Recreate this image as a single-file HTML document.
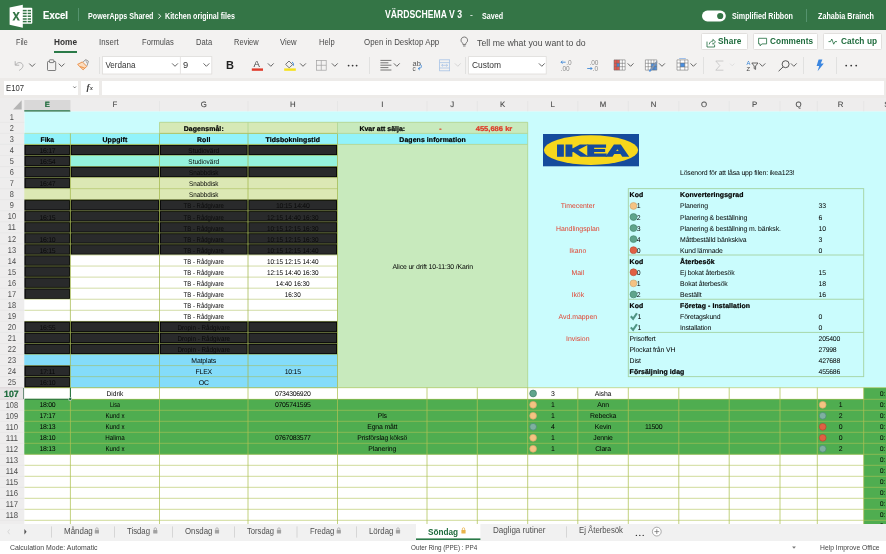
<!DOCTYPE html>
<html><head><meta charset="utf-8"><title>VÄRDSCHEMA V 3</title>
<style>
html,body{margin:0;padding:0;}
body{width:886px;height:554px;overflow:hidden;background:#f3f2f1;font-family:"Liberation Sans", sans-serif;position:relative;}
#w{position:absolute;left:0;top:0;width:886px;height:554px;will-change:transform;}
.a{position:absolute;white-space:nowrap;}
</style></head><body>
<div id="w">
<svg width="886" height="554" viewBox="0 0 886 554" style="position:absolute;left:0;top:0" text-rendering="geometricPrecision" font-family='"Liberation Sans", sans-serif'><rect x="0.00" y="97.00" width="886.00" height="430.00" fill="#ffffff" />
<rect x="24.30" y="111.25" width="861.70" height="276.45" fill="#cafcfd" />
<rect x="24.00" y="144.12" width="46.70" height="11.66" fill="#292a2b" />
<rect x="25.20" y="145.22" width="44.30" height="9.46" fill="none" stroke="#050505" stroke-width="0.9"/>
<rect x="70.10" y="144.12" width="89.70" height="11.66" fill="#292a2b" />
<rect x="71.30" y="145.22" width="87.30" height="9.46" fill="none" stroke="#050505" stroke-width="0.9"/>
<rect x="159.20" y="144.12" width="89.10" height="11.66" fill="#292a2b" />
<rect x="160.40" y="145.22" width="86.70" height="9.46" fill="none" stroke="#050505" stroke-width="0.9"/>
<rect x="247.70" y="144.12" width="90.10" height="11.66" fill="#292a2b" />
<rect x="248.90" y="145.22" width="87.70" height="9.46" fill="none" stroke="#050505" stroke-width="0.9"/>
<rect x="24.00" y="155.18" width="46.70" height="11.66" fill="#292a2b" />
<rect x="25.20" y="156.28" width="44.30" height="9.46" fill="none" stroke="#050505" stroke-width="0.9"/>
<rect x="70.10" y="155.18" width="89.70" height="11.66" fill="#95f3dc" />
<rect x="159.20" y="155.18" width="89.10" height="11.66" fill="#95f3dc" />
<rect x="247.70" y="155.18" width="90.10" height="11.66" fill="#95f3dc" />
<rect x="24.00" y="166.24" width="46.70" height="11.66" fill="#292a2b" />
<rect x="25.20" y="167.34" width="44.30" height="9.46" fill="none" stroke="#050505" stroke-width="0.9"/>
<rect x="70.10" y="166.24" width="89.70" height="11.66" fill="#292a2b" />
<rect x="71.30" y="167.34" width="87.30" height="9.46" fill="none" stroke="#050505" stroke-width="0.9"/>
<rect x="159.20" y="166.24" width="89.10" height="11.66" fill="#292a2b" />
<rect x="160.40" y="167.34" width="86.70" height="9.46" fill="none" stroke="#050505" stroke-width="0.9"/>
<rect x="247.70" y="166.24" width="90.10" height="11.66" fill="#292a2b" />
<rect x="248.90" y="167.34" width="87.70" height="9.46" fill="none" stroke="#050505" stroke-width="0.9"/>
<rect x="24.00" y="177.30" width="46.70" height="11.66" fill="#292a2b" />
<rect x="25.20" y="178.40" width="44.30" height="9.46" fill="none" stroke="#050505" stroke-width="0.9"/>
<rect x="70.10" y="177.30" width="89.70" height="11.66" fill="#dce8b4" />
<rect x="159.20" y="177.30" width="89.10" height="11.66" fill="#dce8b4" />
<rect x="247.70" y="177.30" width="90.10" height="11.66" fill="#dce8b4" />
<rect x="24.00" y="188.36" width="46.70" height="11.66" fill="#dce8b4" />
<rect x="70.10" y="188.36" width="89.70" height="11.66" fill="#dce8b4" />
<rect x="159.20" y="188.36" width="89.10" height="11.66" fill="#dce8b4" />
<rect x="247.70" y="188.36" width="90.10" height="11.66" fill="#dce8b4" />
<rect x="24.00" y="199.41" width="46.70" height="11.66" fill="#292a2b" />
<rect x="25.20" y="200.51" width="44.30" height="9.46" fill="none" stroke="#050505" stroke-width="0.9"/>
<rect x="70.10" y="199.41" width="89.70" height="11.66" fill="#292a2b" />
<rect x="71.30" y="200.51" width="87.30" height="9.46" fill="none" stroke="#050505" stroke-width="0.9"/>
<rect x="159.20" y="199.41" width="89.10" height="11.66" fill="#292a2b" />
<rect x="160.40" y="200.51" width="86.70" height="9.46" fill="none" stroke="#050505" stroke-width="0.9"/>
<rect x="247.70" y="199.41" width="90.10" height="11.66" fill="#292a2b" />
<rect x="248.90" y="200.51" width="87.70" height="9.46" fill="none" stroke="#050505" stroke-width="0.9"/>
<rect x="24.00" y="210.47" width="46.70" height="11.66" fill="#292a2b" />
<rect x="25.20" y="211.57" width="44.30" height="9.46" fill="none" stroke="#050505" stroke-width="0.9"/>
<rect x="70.10" y="210.47" width="89.70" height="11.66" fill="#292a2b" />
<rect x="71.30" y="211.57" width="87.30" height="9.46" fill="none" stroke="#050505" stroke-width="0.9"/>
<rect x="159.20" y="210.47" width="89.10" height="11.66" fill="#292a2b" />
<rect x="160.40" y="211.57" width="86.70" height="9.46" fill="none" stroke="#050505" stroke-width="0.9"/>
<rect x="247.70" y="210.47" width="90.10" height="11.66" fill="#292a2b" />
<rect x="248.90" y="211.57" width="87.70" height="9.46" fill="none" stroke="#050505" stroke-width="0.9"/>
<rect x="24.00" y="221.53" width="46.70" height="11.66" fill="#292a2b" />
<rect x="25.20" y="222.63" width="44.30" height="9.46" fill="none" stroke="#050505" stroke-width="0.9"/>
<rect x="70.10" y="221.53" width="89.70" height="11.66" fill="#292a2b" />
<rect x="71.30" y="222.63" width="87.30" height="9.46" fill="none" stroke="#050505" stroke-width="0.9"/>
<rect x="159.20" y="221.53" width="89.10" height="11.66" fill="#292a2b" />
<rect x="160.40" y="222.63" width="86.70" height="9.46" fill="none" stroke="#050505" stroke-width="0.9"/>
<rect x="247.70" y="221.53" width="90.10" height="11.66" fill="#292a2b" />
<rect x="248.90" y="222.63" width="87.70" height="9.46" fill="none" stroke="#050505" stroke-width="0.9"/>
<rect x="24.00" y="232.59" width="46.70" height="11.66" fill="#292a2b" />
<rect x="25.20" y="233.69" width="44.30" height="9.46" fill="none" stroke="#050505" stroke-width="0.9"/>
<rect x="70.10" y="232.59" width="89.70" height="11.66" fill="#292a2b" />
<rect x="71.30" y="233.69" width="87.30" height="9.46" fill="none" stroke="#050505" stroke-width="0.9"/>
<rect x="159.20" y="232.59" width="89.10" height="11.66" fill="#292a2b" />
<rect x="160.40" y="233.69" width="86.70" height="9.46" fill="none" stroke="#050505" stroke-width="0.9"/>
<rect x="247.70" y="232.59" width="90.10" height="11.66" fill="#292a2b" />
<rect x="248.90" y="233.69" width="87.70" height="9.46" fill="none" stroke="#050505" stroke-width="0.9"/>
<rect x="24.00" y="243.65" width="46.70" height="11.66" fill="#292a2b" />
<rect x="25.20" y="244.75" width="44.30" height="9.46" fill="none" stroke="#050505" stroke-width="0.9"/>
<rect x="70.10" y="243.65" width="89.70" height="11.66" fill="#292a2b" />
<rect x="71.30" y="244.75" width="87.30" height="9.46" fill="none" stroke="#050505" stroke-width="0.9"/>
<rect x="159.20" y="243.65" width="89.10" height="11.66" fill="#292a2b" />
<rect x="160.40" y="244.75" width="86.70" height="9.46" fill="none" stroke="#050505" stroke-width="0.9"/>
<rect x="247.70" y="243.65" width="90.10" height="11.66" fill="#292a2b" />
<rect x="248.90" y="244.75" width="87.70" height="9.46" fill="none" stroke="#050505" stroke-width="0.9"/>
<rect x="24.00" y="254.70" width="46.70" height="11.66" fill="#292a2b" />
<rect x="25.20" y="255.80" width="44.30" height="9.46" fill="none" stroke="#050505" stroke-width="0.9"/>
<rect x="70.10" y="254.70" width="89.70" height="11.66" fill="#ffffff" />
<rect x="159.20" y="254.70" width="89.10" height="11.66" fill="#ffffff" />
<rect x="247.70" y="254.70" width="90.10" height="11.66" fill="#ffffff" />
<rect x="24.00" y="265.76" width="46.70" height="11.66" fill="#292a2b" />
<rect x="25.20" y="266.86" width="44.30" height="9.46" fill="none" stroke="#050505" stroke-width="0.9"/>
<rect x="70.10" y="265.76" width="89.70" height="11.66" fill="#ffffff" />
<rect x="159.20" y="265.76" width="89.10" height="11.66" fill="#ffffff" />
<rect x="247.70" y="265.76" width="90.10" height="11.66" fill="#ffffff" />
<rect x="24.00" y="276.82" width="46.70" height="11.66" fill="#292a2b" />
<rect x="25.20" y="277.92" width="44.30" height="9.46" fill="none" stroke="#050505" stroke-width="0.9"/>
<rect x="70.10" y="276.82" width="89.70" height="11.66" fill="#ffffff" />
<rect x="159.20" y="276.82" width="89.10" height="11.66" fill="#ffffff" />
<rect x="247.70" y="276.82" width="90.10" height="11.66" fill="#ffffff" />
<rect x="24.00" y="287.88" width="46.70" height="11.66" fill="#292a2b" />
<rect x="25.20" y="288.98" width="44.30" height="9.46" fill="none" stroke="#050505" stroke-width="0.9"/>
<rect x="70.10" y="287.88" width="89.70" height="11.66" fill="#ffffff" />
<rect x="159.20" y="287.88" width="89.10" height="11.66" fill="#ffffff" />
<rect x="247.70" y="287.88" width="90.10" height="11.66" fill="#ffffff" />
<rect x="24.00" y="298.94" width="46.70" height="11.66" fill="#ffffff" />
<rect x="70.10" y="298.94" width="89.70" height="11.66" fill="#ffffff" />
<rect x="159.20" y="298.94" width="89.10" height="11.66" fill="#ffffff" />
<rect x="247.70" y="298.94" width="90.10" height="11.66" fill="#ffffff" />
<rect x="24.00" y="309.99" width="46.70" height="11.66" fill="#ffffff" />
<rect x="70.10" y="309.99" width="89.70" height="11.66" fill="#ffffff" />
<rect x="159.20" y="309.99" width="89.10" height="11.66" fill="#ffffff" />
<rect x="247.70" y="309.99" width="90.10" height="11.66" fill="#ffffff" />
<rect x="24.00" y="321.05" width="46.70" height="11.66" fill="#292a2b" />
<rect x="25.20" y="322.15" width="44.30" height="9.46" fill="none" stroke="#050505" stroke-width="0.9"/>
<rect x="70.10" y="321.05" width="89.70" height="11.66" fill="#292a2b" />
<rect x="71.30" y="322.15" width="87.30" height="9.46" fill="none" stroke="#050505" stroke-width="0.9"/>
<rect x="159.20" y="321.05" width="89.10" height="11.66" fill="#292a2b" />
<rect x="160.40" y="322.15" width="86.70" height="9.46" fill="none" stroke="#050505" stroke-width="0.9"/>
<rect x="247.70" y="321.05" width="90.10" height="11.66" fill="#292a2b" />
<rect x="248.90" y="322.15" width="87.70" height="9.46" fill="none" stroke="#050505" stroke-width="0.9"/>
<rect x="24.00" y="332.11" width="46.70" height="11.66" fill="#292a2b" />
<rect x="25.20" y="333.21" width="44.30" height="9.46" fill="none" stroke="#050505" stroke-width="0.9"/>
<rect x="70.10" y="332.11" width="89.70" height="11.66" fill="#292a2b" />
<rect x="71.30" y="333.21" width="87.30" height="9.46" fill="none" stroke="#050505" stroke-width="0.9"/>
<rect x="159.20" y="332.11" width="89.10" height="11.66" fill="#292a2b" />
<rect x="160.40" y="333.21" width="86.70" height="9.46" fill="none" stroke="#050505" stroke-width="0.9"/>
<rect x="247.70" y="332.11" width="90.10" height="11.66" fill="#292a2b" />
<rect x="248.90" y="333.21" width="87.70" height="9.46" fill="none" stroke="#050505" stroke-width="0.9"/>
<rect x="24.00" y="343.17" width="46.70" height="11.66" fill="#292a2b" />
<rect x="25.20" y="344.27" width="44.30" height="9.46" fill="none" stroke="#050505" stroke-width="0.9"/>
<rect x="70.10" y="343.17" width="89.70" height="11.66" fill="#292a2b" />
<rect x="71.30" y="344.27" width="87.30" height="9.46" fill="none" stroke="#050505" stroke-width="0.9"/>
<rect x="159.20" y="343.17" width="89.10" height="11.66" fill="#292a2b" />
<rect x="160.40" y="344.27" width="86.70" height="9.46" fill="none" stroke="#050505" stroke-width="0.9"/>
<rect x="247.70" y="343.17" width="90.10" height="11.66" fill="#292a2b" />
<rect x="248.90" y="344.27" width="87.70" height="9.46" fill="none" stroke="#050505" stroke-width="0.9"/>
<rect x="24.00" y="354.23" width="46.70" height="11.66" fill="#84dcfa" />
<rect x="70.10" y="354.23" width="89.70" height="11.66" fill="#84dcfa" />
<rect x="159.20" y="354.23" width="89.10" height="11.66" fill="#84dcfa" />
<rect x="247.70" y="354.23" width="90.10" height="11.66" fill="#84dcfa" />
<rect x="24.00" y="365.28" width="46.70" height="11.66" fill="#292a2b" />
<rect x="25.20" y="366.38" width="44.30" height="9.46" fill="none" stroke="#050505" stroke-width="0.9"/>
<rect x="70.10" y="365.28" width="89.70" height="11.66" fill="#84dcfa" />
<rect x="159.20" y="365.28" width="89.10" height="11.66" fill="#84dcfa" />
<rect x="247.70" y="365.28" width="90.10" height="11.66" fill="#84dcfa" />
<rect x="24.00" y="376.34" width="46.70" height="11.66" fill="#292a2b" />
<rect x="25.20" y="377.44" width="44.30" height="9.46" fill="none" stroke="#050505" stroke-width="0.9"/>
<rect x="70.10" y="376.34" width="89.70" height="11.66" fill="#84dcfa" />
<rect x="159.20" y="376.34" width="89.10" height="11.66" fill="#84dcfa" />
<rect x="247.70" y="376.34" width="90.10" height="11.66" fill="#84dcfa" />
<rect x="24.00" y="133.07" width="504.00" height="11.66" fill="#92f3fb" />
<rect x="159.20" y="122.01" width="178.60" height="11.66" fill="#d6e9b6" />
<rect x="337.20" y="122.01" width="190.80" height="11.66" fill="#c8eabd" />
<rect x="337.20" y="144.12" width="190.80" height="243.88" fill="#c8eabd" />
<line x1="24.30" y1="133.37" x2="159.50" y2="133.37" stroke="#c5dc9a" stroke-width="0.7" />
<line x1="159.50" y1="133.37" x2="337.50" y2="133.37" stroke="#a4b84e" stroke-width="0.8" />
<line x1="24.30" y1="144.42" x2="337.50" y2="144.42" stroke="#a4b84e" stroke-width="0.9" />
<line x1="24.30" y1="155.48" x2="337.50" y2="155.48" stroke="#a4b84e" stroke-width="0.5" />
<line x1="24.30" y1="166.54" x2="337.50" y2="166.54" stroke="#a4b84e" stroke-width="0.5" />
<line x1="24.30" y1="177.60" x2="337.50" y2="177.60" stroke="#a4b84e" stroke-width="0.5" />
<line x1="24.30" y1="188.66" x2="337.50" y2="188.66" stroke="#a4b84e" stroke-width="0.5" />
<line x1="24.30" y1="199.71" x2="337.50" y2="199.71" stroke="#a4b84e" stroke-width="0.5" />
<line x1="24.30" y1="210.77" x2="337.50" y2="210.77" stroke="#a4b84e" stroke-width="0.5" />
<line x1="24.30" y1="221.83" x2="337.50" y2="221.83" stroke="#a4b84e" stroke-width="0.5" />
<line x1="24.30" y1="232.89" x2="337.50" y2="232.89" stroke="#a4b84e" stroke-width="0.5" />
<line x1="24.30" y1="243.95" x2="337.50" y2="243.95" stroke="#a4b84e" stroke-width="0.5" />
<line x1="24.30" y1="255.00" x2="337.50" y2="255.00" stroke="#a4b84e" stroke-width="0.5" />
<line x1="24.30" y1="266.06" x2="337.50" y2="266.06" stroke="#a4b84e" stroke-width="0.5" />
<line x1="24.30" y1="277.12" x2="337.50" y2="277.12" stroke="#a4b84e" stroke-width="0.5" />
<line x1="24.30" y1="288.18" x2="337.50" y2="288.18" stroke="#a4b84e" stroke-width="0.5" />
<line x1="24.30" y1="299.24" x2="337.50" y2="299.24" stroke="#a4b84e" stroke-width="0.5" />
<line x1="24.30" y1="310.29" x2="337.50" y2="310.29" stroke="#a4b84e" stroke-width="0.5" />
<line x1="24.30" y1="321.35" x2="337.50" y2="321.35" stroke="#a4b84e" stroke-width="0.5" />
<line x1="24.30" y1="332.41" x2="337.50" y2="332.41" stroke="#a4b84e" stroke-width="0.5" />
<line x1="24.30" y1="343.47" x2="337.50" y2="343.47" stroke="#a4b84e" stroke-width="0.5" />
<line x1="24.30" y1="354.53" x2="337.50" y2="354.53" stroke="#a4b84e" stroke-width="0.5" />
<line x1="24.30" y1="365.58" x2="337.50" y2="365.58" stroke="#a4b84e" stroke-width="0.5" />
<line x1="24.30" y1="376.64" x2="337.50" y2="376.64" stroke="#a4b84e" stroke-width="0.5" />
<line x1="24.30" y1="387.70" x2="337.50" y2="387.70" stroke="#a4b84e" stroke-width="0.5" />
<line x1="70.40" y1="133.37" x2="70.40" y2="387.70" stroke="#a4b84e" stroke-width="0.75" />
<line x1="159.50" y1="133.37" x2="159.50" y2="387.70" stroke="#a4b84e" stroke-width="0.75" />
<line x1="248.00" y1="133.37" x2="248.00" y2="387.70" stroke="#a4b84e" stroke-width="0.75" />
<line x1="337.50" y1="133.37" x2="337.50" y2="387.70" stroke="#a4b84e" stroke-width="0.75" />
<line x1="159.50" y1="122.31" x2="527.70" y2="122.31" stroke="#b0d492" stroke-width="0.8" />
<line x1="159.50" y1="122.31" x2="159.50" y2="133.37" stroke="#b0d492" stroke-width="0.8" />
<line x1="248.00" y1="122.31" x2="248.00" y2="133.37" stroke="#b0d492" stroke-width="0.8" />
<line x1="337.50" y1="122.31" x2="337.50" y2="133.37" stroke="#b0d492" stroke-width="0.8" />
<line x1="527.70" y1="122.31" x2="527.70" y2="133.37" stroke="#b0d492" stroke-width="0.8" />
<line x1="337.50" y1="133.37" x2="527.70" y2="133.37" stroke="#b0d492" stroke-width="0.8" />
<line x1="337.50" y1="144.42" x2="527.70" y2="144.42" stroke="#b0d492" stroke-width="0.8" />
<line x1="527.70" y1="133.37" x2="527.70" y2="387.70" stroke="#b0d492" stroke-width="0.8" />
<text x="203.75" y="131.04" font-size="6.9" fill="#000" text-anchor="middle" font-weight="bold"  letter-spacing="0.1" stroke="#000" stroke-width="0.22">Dagensmål:</text>
<text x="359.40" y="131.04" font-size="6.9" fill="#000" text-anchor="start" font-weight="bold"  textLength="45.7" lengthAdjust="spacingAndGlyphs" stroke="#000" stroke-width="0.22">Kvar att sälja:</text>
<text x="440.50" y="131.04" font-size="6.9" fill="#de3b28" text-anchor="middle" font-weight="bold"  letter-spacing="0.1" stroke="#de3b28" stroke-width="0.22">-</text>
<text x="494.00" y="131.04" font-size="6.9" fill="#de3b28" text-anchor="middle" font-weight="bold"  textLength="36.6" lengthAdjust="spacingAndGlyphs" stroke="#de3b28" stroke-width="0.22">455,686 kr</text>
<text x="47.35" y="142.09" font-size="6.9" fill="#000" text-anchor="middle" font-weight="bold"  textLength="13.5" lengthAdjust="spacingAndGlyphs" stroke="#000" stroke-width="0.22">Fika</text>
<text x="114.95" y="142.09" font-size="6.9" fill="#000" text-anchor="middle" font-weight="bold"  letter-spacing="0.1" stroke="#000" stroke-width="0.22">Uppgift</text>
<text x="203.75" y="142.09" font-size="6.9" fill="#000" text-anchor="middle" font-weight="bold"  letter-spacing="0.1" stroke="#000" stroke-width="0.22">Roll</text>
<text x="292.75" y="142.09" font-size="6.9" fill="#000" text-anchor="middle" font-weight="bold"  letter-spacing="0.1" stroke="#000" stroke-width="0.22">Tidsbokningstid</text>
<text x="432.60" y="142.09" font-size="6.9" fill="#000" text-anchor="middle" font-weight="bold"  letter-spacing="0.1" stroke="#000" stroke-width="0.22">Dagens information</text>
<text x="47.35" y="153.15" font-size="6.9" fill="#0a0a0a" text-anchor="middle" font-weight="normal"  letter-spacing="-0.27">16:17</text>
<text x="47.35" y="164.21" font-size="6.9" fill="#0a0a0a" text-anchor="middle" font-weight="normal"  letter-spacing="-0.27">16:54</text>
<text x="47.35" y="186.33" font-size="6.9" fill="#0a0a0a" text-anchor="middle" font-weight="normal"  letter-spacing="-0.27">16:47</text>
<text x="47.35" y="219.50" font-size="6.9" fill="#0a0a0a" text-anchor="middle" font-weight="normal"  letter-spacing="-0.27">16:15</text>
<text x="47.35" y="241.62" font-size="6.9" fill="#0a0a0a" text-anchor="middle" font-weight="normal"  letter-spacing="-0.27">16:10</text>
<text x="47.35" y="252.67" font-size="6.9" fill="#0a0a0a" text-anchor="middle" font-weight="normal"  letter-spacing="-0.27">16:15</text>
<text x="47.35" y="330.08" font-size="6.9" fill="#0a0a0a" text-anchor="middle" font-weight="normal"  letter-spacing="-0.27">16:55</text>
<text x="47.35" y="374.31" font-size="6.9" fill="#0a0a0a" text-anchor="middle" font-weight="normal"  letter-spacing="-0.27">17:11</text>
<text x="47.35" y="385.37" font-size="6.9" fill="#0a0a0a" text-anchor="middle" font-weight="normal"  letter-spacing="-0.27">16:10</text>
<text x="203.75" y="153.15" font-size="6.9" fill="#0a0a0a" text-anchor="middle" font-weight="normal"  textLength="30.8" lengthAdjust="spacingAndGlyphs">Studiovärd</text>
<text x="203.75" y="164.21" font-size="6.9" fill="#000" text-anchor="middle" font-weight="normal"  textLength="30.8" lengthAdjust="spacingAndGlyphs">Studiovärd</text>
<text x="203.75" y="175.27" font-size="6.9" fill="#0a0a0a" text-anchor="middle" font-weight="normal"  textLength="29.5" lengthAdjust="spacingAndGlyphs">Snabbdisk</text>
<text x="203.75" y="186.33" font-size="6.9" fill="#000" text-anchor="middle" font-weight="normal"  textLength="29.5" lengthAdjust="spacingAndGlyphs">Snabbdisk</text>
<text x="203.75" y="197.38" font-size="6.9" fill="#000" text-anchor="middle" font-weight="normal"  textLength="29.5" lengthAdjust="spacingAndGlyphs">Snabbdisk</text>
<text x="203.75" y="208.44" font-size="6.9" fill="#0a0a0a" text-anchor="middle" font-weight="normal"  textLength="40.3" lengthAdjust="spacingAndGlyphs">TB - Rådgivare</text>
<text x="203.75" y="219.50" font-size="6.9" fill="#0a0a0a" text-anchor="middle" font-weight="normal"  textLength="40.3" lengthAdjust="spacingAndGlyphs">TB - Rådgivare</text>
<text x="203.75" y="230.56" font-size="6.9" fill="#0a0a0a" text-anchor="middle" font-weight="normal"  textLength="40.3" lengthAdjust="spacingAndGlyphs">TB - Rådgivare</text>
<text x="203.75" y="241.62" font-size="6.9" fill="#0a0a0a" text-anchor="middle" font-weight="normal"  textLength="40.3" lengthAdjust="spacingAndGlyphs">TB - Rådgivare</text>
<text x="203.75" y="252.67" font-size="6.9" fill="#0a0a0a" text-anchor="middle" font-weight="normal"  textLength="40.3" lengthAdjust="spacingAndGlyphs">TB - Rådgivare</text>
<text x="203.75" y="263.73" font-size="6.9" fill="#000" text-anchor="middle" font-weight="normal"  textLength="40.3" lengthAdjust="spacingAndGlyphs">TB - Rådgivare</text>
<text x="203.75" y="274.79" font-size="6.9" fill="#000" text-anchor="middle" font-weight="normal"  textLength="40.3" lengthAdjust="spacingAndGlyphs">TB - Rådgivare</text>
<text x="203.75" y="285.85" font-size="6.9" fill="#000" text-anchor="middle" font-weight="normal"  textLength="40.3" lengthAdjust="spacingAndGlyphs">TB - Rådgivare</text>
<text x="203.75" y="296.91" font-size="6.9" fill="#000" text-anchor="middle" font-weight="normal"  textLength="40.3" lengthAdjust="spacingAndGlyphs">TB - Rådgivare</text>
<text x="203.75" y="307.96" font-size="6.9" fill="#000" text-anchor="middle" font-weight="normal"  textLength="40.3" lengthAdjust="spacingAndGlyphs">TB - Rådgivare</text>
<text x="203.75" y="319.02" font-size="6.9" fill="#000" text-anchor="middle" font-weight="normal"  textLength="40.3" lengthAdjust="spacingAndGlyphs">TB - Rådgivare</text>
<text x="203.75" y="330.08" font-size="6.9" fill="#0a0a0a" text-anchor="middle" font-weight="normal"  textLength="52.5" lengthAdjust="spacingAndGlyphs">Dropin - Rådgivare</text>
<text x="203.75" y="341.14" font-size="6.9" fill="#0a0a0a" text-anchor="middle" font-weight="normal"  textLength="52.5" lengthAdjust="spacingAndGlyphs">Dropin - Rådgivare</text>
<text x="203.75" y="352.20" font-size="6.9" fill="#0a0a0a" text-anchor="middle" font-weight="normal"  textLength="52.5" lengthAdjust="spacingAndGlyphs">Dropin - Rådgivare</text>
<text x="203.75" y="363.25" font-size="6.9" fill="#000" text-anchor="middle" font-weight="normal"  letter-spacing="-0.15">Matplats</text>
<text x="203.75" y="374.31" font-size="6.9" fill="#000" text-anchor="middle" font-weight="normal"  letter-spacing="-0.15">FLEX</text>
<text x="203.75" y="385.37" font-size="6.9" fill="#000" text-anchor="middle" font-weight="normal"  letter-spacing="-0.15">OC</text>
<text x="292.75" y="208.44" font-size="6.9" fill="#0a0a0a" text-anchor="middle" font-weight="normal"  letter-spacing="-0.27">10:15 14:40</text>
<text x="292.75" y="219.50" font-size="6.9" fill="#0a0a0a" text-anchor="middle" font-weight="normal"  textLength="51.5" lengthAdjust="spacingAndGlyphs">12:15 14:40 16:30</text>
<text x="292.75" y="230.56" font-size="6.9" fill="#0a0a0a" text-anchor="middle" font-weight="normal"  textLength="51.5" lengthAdjust="spacingAndGlyphs">10:15 12:15 16:30</text>
<text x="292.75" y="241.62" font-size="6.9" fill="#0a0a0a" text-anchor="middle" font-weight="normal"  textLength="51.5" lengthAdjust="spacingAndGlyphs">10:15 12:15 16:30</text>
<text x="292.75" y="252.67" font-size="6.9" fill="#0a0a0a" text-anchor="middle" font-weight="normal"  textLength="51.5" lengthAdjust="spacingAndGlyphs">10:15 12:15 14:40</text>
<text x="292.75" y="263.73" font-size="6.9" fill="#000" text-anchor="middle" font-weight="normal"  textLength="51.5" lengthAdjust="spacingAndGlyphs">10:15 12:15 14:40</text>
<text x="292.75" y="274.79" font-size="6.9" fill="#000" text-anchor="middle" font-weight="normal"  textLength="51.5" lengthAdjust="spacingAndGlyphs">12:15 14:40 16:30</text>
<text x="292.75" y="285.85" font-size="6.9" fill="#000" text-anchor="middle" font-weight="normal"  textLength="33.8" lengthAdjust="spacingAndGlyphs">14:40 16:30</text>
<text x="292.75" y="296.91" font-size="6.9" fill="#000" text-anchor="middle" font-weight="normal"  textLength="15.8" lengthAdjust="spacingAndGlyphs">16:30</text>
<text x="292.75" y="374.31" font-size="6.9" fill="#000" text-anchor="middle" font-weight="normal"  letter-spacing="-0.27">10:15</text>
<text x="432.70" y="268.66" font-size="6.9" fill="#000" text-anchor="middle" font-weight="normal"  letter-spacing="-0.15">Alice ur drift 10-11:30 /Karin</text>
<g><rect x="543" y="134" width="96" height="32.3" fill="#154b9c"/><ellipse cx="591" cy="150.1" rx="47.2" ry="14.8" fill="#f7d71c"/><text x="592.3" y="155.6" font-size="15.6" font-weight="bold" fill="#154b9c" text-anchor="middle" textLength="72" lengthAdjust="spacingAndGlyphs" stroke="#154b9c" stroke-width="1.3" stroke-linejoin="miter">IKEA</text></g>
<text x="680.00" y="175.27" font-size="6.9" fill="#000" text-anchor="start" font-weight="normal"  letter-spacing="-0.15">Lösenord för att låsa upp filen: ikea123!</text>
<text x="577.80" y="208.44" font-size="6.9" fill="#e0412f" text-anchor="middle" font-weight="normal"  letter-spacing="0">Timecenter</text>
<text x="577.80" y="230.56" font-size="6.9" fill="#e0412f" text-anchor="middle" font-weight="normal"  letter-spacing="0">Handlingsplan</text>
<text x="577.80" y="252.67" font-size="6.9" fill="#e0412f" text-anchor="middle" font-weight="normal"  letter-spacing="0">Ikano</text>
<text x="577.80" y="274.79" font-size="6.9" fill="#e0412f" text-anchor="middle" font-weight="normal"  letter-spacing="0">Mail</text>
<text x="577.80" y="296.91" font-size="6.9" fill="#e0412f" text-anchor="middle" font-weight="normal"  letter-spacing="0">Ikök</text>
<text x="577.80" y="319.02" font-size="6.9" fill="#e0412f" text-anchor="middle" font-weight="normal"  letter-spacing="0">Avd.mappen</text>
<text x="577.80" y="341.14" font-size="6.9" fill="#e0412f" text-anchor="middle" font-weight="normal"  letter-spacing="0">Invision</text>
<rect x="628.30" y="188.66" width="235.40" height="187.99" fill="none" stroke="#a4d2a0" stroke-width="0.9"/>
<line x1="628.30" y1="255.00" x2="863.70" y2="255.00" stroke="#a4d2a0" stroke-width="0.9" />
<line x1="628.30" y1="299.24" x2="863.70" y2="299.24" stroke="#a4d2a0" stroke-width="0.9" />
<line x1="628.30" y1="332.41" x2="863.70" y2="332.41" stroke="#a4d2a0" stroke-width="0.9" />
<text x="629.60" y="197.38" font-size="6.9" fill="#000" text-anchor="start" font-weight="bold"  letter-spacing="0.1" stroke="#000" stroke-width="0.22">Kod</text>
<text x="680.10" y="197.38" font-size="6.9" fill="#000" text-anchor="start" font-weight="bold"  letter-spacing="0.1" stroke="#000" stroke-width="0.22">Konverteringsgrad</text>
<text x="636.70" y="208.44" font-size="6.9" fill="#000" text-anchor="start" font-weight="normal"  letter-spacing="-0.27">1</text>
<circle cx="633.50" cy="205.94" r="3.45" fill="#f4c383" stroke="#c9a06a" stroke-width="0.6"/>
<text x="680.10" y="208.44" font-size="6.9" fill="#000" text-anchor="start" font-weight="normal"  letter-spacing="-0.15">Planering</text>
<text x="818.60" y="208.44" font-size="6.9" fill="#000" text-anchor="start" font-weight="normal"  letter-spacing="-0.27">33</text>
<text x="636.70" y="219.50" font-size="6.9" fill="#000" text-anchor="start" font-weight="normal"  letter-spacing="-0.27">2</text>
<circle cx="633.50" cy="217.00" r="3.45" fill="#5fa48c" stroke="#3f7f68" stroke-width="0.6"/>
<text x="680.10" y="219.50" font-size="6.9" fill="#000" text-anchor="start" font-weight="normal"  letter-spacing="-0.15">Planering &amp; beställning</text>
<text x="818.60" y="219.50" font-size="6.9" fill="#000" text-anchor="start" font-weight="normal"  letter-spacing="-0.27">6</text>
<text x="636.70" y="230.56" font-size="6.9" fill="#000" text-anchor="start" font-weight="normal"  letter-spacing="-0.27">3</text>
<circle cx="633.50" cy="228.06" r="3.45" fill="#5fa48c" stroke="#3f7f68" stroke-width="0.6"/>
<text x="680.10" y="230.56" font-size="6.9" fill="#000" text-anchor="start" font-weight="normal"  letter-spacing="-0.15">Planering &amp; beställning m. bänksk.</text>
<text x="818.60" y="230.56" font-size="6.9" fill="#000" text-anchor="start" font-weight="normal"  letter-spacing="-0.27">10</text>
<text x="636.70" y="241.62" font-size="6.9" fill="#000" text-anchor="start" font-weight="normal"  letter-spacing="-0.27">4</text>
<circle cx="633.50" cy="239.12" r="3.45" fill="#5fa48c" stroke="#3f7f68" stroke-width="0.6"/>
<text x="680.10" y="241.62" font-size="6.9" fill="#000" text-anchor="start" font-weight="normal"  letter-spacing="-0.15">Måttbeställd bänkskiva</text>
<text x="818.60" y="241.62" font-size="6.9" fill="#000" text-anchor="start" font-weight="normal"  letter-spacing="-0.27">3</text>
<text x="636.70" y="252.67" font-size="6.9" fill="#000" text-anchor="start" font-weight="normal"  letter-spacing="-0.27">0</text>
<circle cx="633.50" cy="250.17" r="3.45" fill="#e06044" stroke="#b8472f" stroke-width="0.6"/>
<text x="680.10" y="252.67" font-size="6.9" fill="#000" text-anchor="start" font-weight="normal"  letter-spacing="-0.15">Kund lämnade</text>
<text x="818.60" y="252.67" font-size="6.9" fill="#000" text-anchor="start" font-weight="normal"  letter-spacing="-0.27">0</text>
<text x="629.60" y="263.73" font-size="6.9" fill="#000" text-anchor="start" font-weight="bold"  letter-spacing="0.1" stroke="#000" stroke-width="0.22">Kod</text>
<text x="680.10" y="263.73" font-size="6.9" fill="#000" text-anchor="start" font-weight="bold"  letter-spacing="0.1" stroke="#000" stroke-width="0.22">Återbesök</text>
<text x="636.70" y="274.79" font-size="6.9" fill="#000" text-anchor="start" font-weight="normal"  letter-spacing="-0.27">0</text>
<circle cx="633.50" cy="272.29" r="3.45" fill="#e06044" stroke="#b8472f" stroke-width="0.6"/>
<text x="680.10" y="274.79" font-size="6.9" fill="#000" text-anchor="start" font-weight="normal"  letter-spacing="-0.15">Ej bokat återbesök</text>
<text x="818.60" y="274.79" font-size="6.9" fill="#000" text-anchor="start" font-weight="normal"  letter-spacing="-0.27">15</text>
<text x="636.70" y="285.85" font-size="6.9" fill="#000" text-anchor="start" font-weight="normal"  letter-spacing="-0.27">1</text>
<circle cx="633.50" cy="283.35" r="3.45" fill="#f4c383" stroke="#c9a06a" stroke-width="0.6"/>
<text x="680.10" y="285.85" font-size="6.9" fill="#000" text-anchor="start" font-weight="normal"  letter-spacing="-0.15">Bokat återbesök</text>
<text x="818.60" y="285.85" font-size="6.9" fill="#000" text-anchor="start" font-weight="normal"  letter-spacing="-0.27">18</text>
<text x="636.70" y="296.91" font-size="6.9" fill="#000" text-anchor="start" font-weight="normal"  letter-spacing="-0.27">2</text>
<circle cx="633.50" cy="294.41" r="3.45" fill="#5fa48c" stroke="#3f7f68" stroke-width="0.6"/>
<text x="680.10" y="296.91" font-size="6.9" fill="#000" text-anchor="start" font-weight="normal"  letter-spacing="-0.15">Beställt</text>
<text x="818.60" y="296.91" font-size="6.9" fill="#000" text-anchor="start" font-weight="normal"  letter-spacing="-0.27">16</text>
<text x="629.60" y="307.96" font-size="6.9" fill="#000" text-anchor="start" font-weight="bold"  letter-spacing="0.1" stroke="#000" stroke-width="0.22">Kod</text>
<text x="680.10" y="307.96" font-size="6.9" fill="#000" text-anchor="start" font-weight="bold"  letter-spacing="0.1" stroke="#000" stroke-width="0.22">Företag - Installation</text>
<path d="M630.80 316.32 l2.3 2.5 l3.8 -5.6" fill="none" stroke="#4f9484" stroke-width="2.1"/>
<text x="637.50" y="319.02" font-size="6.9" fill="#000" text-anchor="start" font-weight="normal"  letter-spacing="-0.27">1</text>
<text x="680.10" y="319.02" font-size="6.9" fill="#000" text-anchor="start" font-weight="normal"  letter-spacing="-0.15">Företagskund</text>
<text x="818.60" y="319.02" font-size="6.9" fill="#000" text-anchor="start" font-weight="normal"  letter-spacing="-0.27">0</text>
<path d="M630.80 327.38 l2.3 2.5 l3.8 -5.6" fill="none" stroke="#4f9484" stroke-width="2.1"/>
<text x="637.50" y="330.08" font-size="6.9" fill="#000" text-anchor="start" font-weight="normal"  letter-spacing="-0.27">1</text>
<text x="680.10" y="330.08" font-size="6.9" fill="#000" text-anchor="start" font-weight="normal"  letter-spacing="-0.15">Installation</text>
<text x="818.60" y="330.08" font-size="6.9" fill="#000" text-anchor="start" font-weight="normal"  letter-spacing="-0.27">0</text>
<text x="629.60" y="341.14" font-size="6.9" fill="#000" text-anchor="start" font-weight="normal"  letter-spacing="-0.15">Prisoffert</text>
<text x="818.60" y="341.14" font-size="6.9" fill="#000" text-anchor="start" font-weight="normal"  letter-spacing="-0.27">205400</text>
<text x="629.60" y="352.20" font-size="6.9" fill="#000" text-anchor="start" font-weight="normal"  letter-spacing="-0.15">Plockat från VH</text>
<text x="818.60" y="352.20" font-size="6.9" fill="#000" text-anchor="start" font-weight="normal"  letter-spacing="-0.27">27998</text>
<text x="629.60" y="363.25" font-size="6.9" fill="#000" text-anchor="start" font-weight="normal"  letter-spacing="-0.15">Dist</text>
<text x="818.60" y="363.25" font-size="6.9" fill="#000" text-anchor="start" font-weight="normal"  letter-spacing="-0.27">427688</text>
<text x="629.60" y="374.31" font-size="6.9" fill="#000" text-anchor="start" font-weight="bold"  letter-spacing="0.1" stroke="#000" stroke-width="0.22">Försäljning idag</text>
<text x="818.60" y="374.31" font-size="6.9" fill="#000" text-anchor="start" font-weight="normal"  letter-spacing="-0.27">455686</text>
<rect x="24.00" y="399.00" width="840.00" height="55.60" fill="#4fad50" />
<rect x="863.70" y="387.70" width="36.30" height="143.60" fill="#4fad50" />
<line x1="24.30" y1="399.30" x2="886.00" y2="399.30" stroke="#aec254" stroke-width="0.6" />
<line x1="24.30" y1="410.30" x2="886.00" y2="410.30" stroke="#aec254" stroke-width="0.6" />
<line x1="24.30" y1="421.30" x2="886.00" y2="421.30" stroke="#aec254" stroke-width="0.6" />
<line x1="24.30" y1="432.30" x2="886.00" y2="432.30" stroke="#aec254" stroke-width="0.6" />
<line x1="24.30" y1="443.30" x2="886.00" y2="443.30" stroke="#aec254" stroke-width="0.6" />
<line x1="24.30" y1="454.30" x2="886.00" y2="454.30" stroke="#aec254" stroke-width="0.6" />
<line x1="24.30" y1="465.30" x2="886.00" y2="465.30" stroke="#aec254" stroke-width="0.6" />
<line x1="24.30" y1="476.30" x2="886.00" y2="476.30" stroke="#aec254" stroke-width="0.6" />
<line x1="24.30" y1="487.30" x2="886.00" y2="487.30" stroke="#aec254" stroke-width="0.6" />
<line x1="24.30" y1="498.30" x2="886.00" y2="498.30" stroke="#aec254" stroke-width="0.6" />
<line x1="24.30" y1="509.30" x2="886.00" y2="509.30" stroke="#aec254" stroke-width="0.6" />
<line x1="24.30" y1="520.30" x2="886.00" y2="520.30" stroke="#aec254" stroke-width="0.6" />
<line x1="24.30" y1="531.30" x2="886.00" y2="531.30" stroke="#aec254" stroke-width="0.6" />
<line x1="70.40" y1="387.70" x2="70.40" y2="531.30" stroke="#aec254" stroke-width="0.75" />
<line x1="159.50" y1="387.70" x2="159.50" y2="531.30" stroke="#aec254" stroke-width="0.75" />
<line x1="248.00" y1="387.70" x2="248.00" y2="531.30" stroke="#aec254" stroke-width="0.75" />
<line x1="337.50" y1="387.70" x2="337.50" y2="531.30" stroke="#aec254" stroke-width="0.75" />
<line x1="427.00" y1="387.70" x2="427.00" y2="531.30" stroke="#aec254" stroke-width="0.75" />
<line x1="477.30" y1="387.70" x2="477.30" y2="531.30" stroke="#aec254" stroke-width="0.75" />
<line x1="527.70" y1="387.70" x2="527.70" y2="531.30" stroke="#aec254" stroke-width="0.75" />
<line x1="577.80" y1="387.70" x2="577.80" y2="531.30" stroke="#aec254" stroke-width="0.75" />
<line x1="628.30" y1="387.70" x2="628.30" y2="531.30" stroke="#aec254" stroke-width="0.75" />
<line x1="678.80" y1="387.70" x2="678.80" y2="531.30" stroke="#aec254" stroke-width="0.75" />
<line x1="729.20" y1="387.70" x2="729.20" y2="531.30" stroke="#aec254" stroke-width="0.75" />
<line x1="780.00" y1="387.70" x2="780.00" y2="531.30" stroke="#aec254" stroke-width="0.75" />
<line x1="817.30" y1="387.70" x2="817.30" y2="531.30" stroke="#aec254" stroke-width="0.75" />
<line x1="863.70" y1="387.70" x2="863.70" y2="531.30" stroke="#aec254" stroke-width="0.75" />
<line x1="24.30" y1="387.70" x2="886.00" y2="387.70" stroke="#aec254" stroke-width="0.6" />
<text x="114.95" y="396.10" font-size="6.9" fill="#000" text-anchor="middle" font-weight="normal"  textLength="16.8" lengthAdjust="spacingAndGlyphs">Didrik</text>
<text x="292.75" y="396.10" font-size="6.9" fill="#000" text-anchor="middle" font-weight="normal"  letter-spacing="-0.27">0734306920</text>
<circle cx="533.10" cy="393.50" r="3.4" fill="#5fa48c" stroke="#3f7f68" stroke-width="0.7"/>
<text x="552.75" y="396.10" font-size="6.9" fill="#000" text-anchor="middle" font-weight="normal"  letter-spacing="-0.27">3</text>
<text x="603.05" y="396.10" font-size="6.9" fill="#000" text-anchor="middle" font-weight="normal"  letter-spacing="-0.15">Aisha</text>
<text x="47.35" y="407.40" font-size="6.9" fill="#000" text-anchor="middle" font-weight="normal"  letter-spacing="-0.27">18:00</text>
<text x="114.95" y="407.40" font-size="6.9" fill="#000" text-anchor="middle" font-weight="normal"  textLength="9.9" lengthAdjust="spacingAndGlyphs">Lisa</text>
<text x="292.75" y="407.40" font-size="6.9" fill="#000" text-anchor="middle" font-weight="normal"  letter-spacing="-0.27">0705741595</text>
<circle cx="533.10" cy="404.80" r="3.4" fill="#f4c383" stroke="#d9a868" stroke-width="0.7"/>
<text x="552.75" y="407.40" font-size="6.9" fill="#000" text-anchor="middle" font-weight="normal"  letter-spacing="-0.27">1</text>
<text x="603.05" y="407.40" font-size="6.9" fill="#000" text-anchor="middle" font-weight="normal"  letter-spacing="-0.15">Ann</text>
<circle cx="822.70" cy="404.80" r="3.4" fill="#f4c383" stroke="#d9a868" stroke-width="0.7"/>
<text x="840.50" y="407.40" font-size="6.9" fill="#000" text-anchor="middle" font-weight="normal"  letter-spacing="-0.27">1</text>
<text x="47.35" y="418.40" font-size="6.9" fill="#000" text-anchor="middle" font-weight="normal"  letter-spacing="-0.27">17:17</text>
<text x="114.95" y="418.40" font-size="6.9" fill="#000" text-anchor="middle" font-weight="normal"  textLength="19.1" lengthAdjust="spacingAndGlyphs">Kund x</text>
<text x="382.25" y="418.40" font-size="6.9" fill="#000" text-anchor="middle" font-weight="normal"  letter-spacing="-0.15">Pls</text>
<circle cx="533.10" cy="415.80" r="3.4" fill="#f4c383" stroke="#d9a868" stroke-width="0.7"/>
<text x="552.75" y="418.40" font-size="6.9" fill="#000" text-anchor="middle" font-weight="normal"  letter-spacing="-0.27">1</text>
<text x="603.05" y="418.40" font-size="6.9" fill="#000" text-anchor="middle" font-weight="normal"  letter-spacing="-0.15">Rebecka</text>
<circle cx="822.70" cy="415.80" r="3.4" fill="#7eb0a0" stroke="#4f8a78" stroke-width="0.7"/>
<text x="840.50" y="418.40" font-size="6.9" fill="#000" text-anchor="middle" font-weight="normal"  letter-spacing="-0.27">2</text>
<text x="47.35" y="429.40" font-size="6.9" fill="#000" text-anchor="middle" font-weight="normal"  letter-spacing="-0.27">18:13</text>
<text x="114.95" y="429.40" font-size="6.9" fill="#000" text-anchor="middle" font-weight="normal"  textLength="19.1" lengthAdjust="spacingAndGlyphs">Kund x</text>
<text x="382.25" y="429.40" font-size="6.9" fill="#000" text-anchor="middle" font-weight="normal"  letter-spacing="-0.15">Egna mått</text>
<circle cx="533.10" cy="426.80" r="3.4" fill="#7eb0a0" stroke="#4f8a78" stroke-width="0.7"/>
<text x="552.75" y="429.40" font-size="6.9" fill="#000" text-anchor="middle" font-weight="normal"  letter-spacing="-0.27">4</text>
<text x="603.05" y="429.40" font-size="6.9" fill="#000" text-anchor="middle" font-weight="normal"  letter-spacing="-0.15">Kevin</text>
<text x="653.55" y="429.40" font-size="6.9" fill="#000" text-anchor="middle" font-weight="normal"  letter-spacing="-0.27">11500</text>
<circle cx="822.70" cy="426.80" r="3.4" fill="#e06044" stroke="#b8472f" stroke-width="0.7"/>
<text x="840.50" y="429.40" font-size="6.9" fill="#000" text-anchor="middle" font-weight="normal"  letter-spacing="-0.27">0</text>
<text x="47.35" y="440.40" font-size="6.9" fill="#000" text-anchor="middle" font-weight="normal"  letter-spacing="-0.27">18:10</text>
<text x="114.95" y="440.40" font-size="6.9" fill="#000" text-anchor="middle" font-weight="normal"  textLength="19.5" lengthAdjust="spacingAndGlyphs">Halima</text>
<text x="292.75" y="440.40" font-size="6.9" fill="#000" text-anchor="middle" font-weight="normal"  letter-spacing="-0.27">0767083577</text>
<text x="382.25" y="440.40" font-size="6.9" fill="#000" text-anchor="middle" font-weight="normal"  letter-spacing="-0.15">Prisförslag köksö</text>
<circle cx="533.10" cy="437.80" r="3.4" fill="#f4c383" stroke="#d9a868" stroke-width="0.7"/>
<text x="552.75" y="440.40" font-size="6.9" fill="#000" text-anchor="middle" font-weight="normal"  letter-spacing="-0.27">1</text>
<text x="603.05" y="440.40" font-size="6.9" fill="#000" text-anchor="middle" font-weight="normal"  letter-spacing="-0.15">Jennie</text>
<circle cx="822.70" cy="437.80" r="3.4" fill="#e06044" stroke="#b8472f" stroke-width="0.7"/>
<text x="840.50" y="440.40" font-size="6.9" fill="#000" text-anchor="middle" font-weight="normal"  letter-spacing="-0.27">0</text>
<text x="47.35" y="451.40" font-size="6.9" fill="#000" text-anchor="middle" font-weight="normal"  letter-spacing="-0.27">18:13</text>
<text x="114.95" y="451.40" font-size="6.9" fill="#000" text-anchor="middle" font-weight="normal"  textLength="19.1" lengthAdjust="spacingAndGlyphs">Kund x</text>
<text x="382.25" y="451.40" font-size="6.9" fill="#000" text-anchor="middle" font-weight="normal"  letter-spacing="-0.15">Planering</text>
<circle cx="533.10" cy="448.80" r="3.4" fill="#f4c383" stroke="#d9a868" stroke-width="0.7"/>
<text x="552.75" y="451.40" font-size="6.9" fill="#000" text-anchor="middle" font-weight="normal"  letter-spacing="-0.27">1</text>
<text x="603.05" y="451.40" font-size="6.9" fill="#000" text-anchor="middle" font-weight="normal"  letter-spacing="-0.15">Clara</text>
<circle cx="822.70" cy="448.80" r="3.4" fill="#7eb0a0" stroke="#4f8a78" stroke-width="0.7"/>
<text x="840.50" y="451.40" font-size="6.9" fill="#000" text-anchor="middle" font-weight="normal"  letter-spacing="-0.27">2</text>
<text x="879.80" y="396.10" font-size="6.9" fill="#000" text-anchor="start" font-weight="normal"  letter-spacing="-0.27">0:</text>
<text x="879.80" y="407.40" font-size="6.9" fill="#000" text-anchor="start" font-weight="normal"  letter-spacing="-0.27">0:</text>
<text x="879.80" y="418.40" font-size="6.9" fill="#000" text-anchor="start" font-weight="normal"  letter-spacing="-0.27">0:</text>
<text x="879.80" y="429.40" font-size="6.9" fill="#000" text-anchor="start" font-weight="normal"  letter-spacing="-0.27">0:</text>
<text x="879.80" y="440.40" font-size="6.9" fill="#000" text-anchor="start" font-weight="normal"  letter-spacing="-0.27">0:</text>
<text x="879.80" y="451.40" font-size="6.9" fill="#000" text-anchor="start" font-weight="normal"  letter-spacing="-0.27">0:</text>
<text x="879.80" y="462.40" font-size="6.9" fill="#000" text-anchor="start" font-weight="normal"  letter-spacing="-0.27">0:</text>
<text x="879.80" y="473.40" font-size="6.9" fill="#000" text-anchor="start" font-weight="normal"  letter-spacing="-0.27">0:</text>
<text x="879.80" y="484.40" font-size="6.9" fill="#000" text-anchor="start" font-weight="normal"  letter-spacing="-0.27">0:</text>
<text x="879.80" y="495.40" font-size="6.9" fill="#000" text-anchor="start" font-weight="normal"  letter-spacing="-0.27">0:</text>
<text x="879.80" y="506.40" font-size="6.9" fill="#000" text-anchor="start" font-weight="normal"  letter-spacing="-0.27">0:</text>
<text x="879.80" y="517.40" font-size="6.9" fill="#000" text-anchor="start" font-weight="normal"  letter-spacing="-0.27">0:</text>
<text x="879.80" y="528.40" font-size="6.9" fill="#000" text-anchor="start" font-weight="normal"  letter-spacing="-0.27">0:</text>
<line x1="24.30" y1="399.30" x2="70.40" y2="399.30" stroke="#1e6b3c" stroke-width="1.1" />
<line x1="70.40" y1="387.70" x2="70.40" y2="399.30" stroke="#1e6b3c" stroke-width="1.0" />
<rect x="68.90" y="397.80" width="2.80" height="2.80" fill="#1e6b3c" stroke="#fff" stroke-width="0.5"/>
<rect x="0.00" y="97.00" width="886.00" height="14.25" fill="#eeeded" />
<rect x="0.00" y="97.00" width="24.30" height="430.00" fill="#eeeded" />
<rect x="24.30" y="100.00" width="46.10" height="11.25" fill="#d9d8d8" />
<rect x="24.30" y="110.05" width="46.10" height="1.60" fill="#4a8a66" />
<rect x="0.00" y="387.70" width="24.30" height="11.60" fill="#e7e4e5" />
<line x1="0.00" y1="387.70" x2="24.30" y2="387.70" stroke="#d9d0d3" stroke-width="0.7" />
<line x1="0.00" y1="399.30" x2="24.30" y2="399.30" stroke="#d9d0d3" stroke-width="0.7" />
<rect x="23.00" y="388.00" width="1.00" height="11.00" fill="#6d8f7c" />
<text x="47.35" y="106.90" font-size="7.6" fill="#1e6b3c" text-anchor="middle" font-weight="bold"  letter-spacing="0" stroke="#1e6b3c" stroke-width="0.22">E</text>
<text x="114.95" y="106.90" font-size="7.8" fill="#4a4a4a" text-anchor="middle" font-weight="normal" stroke="#4a4a4a" stroke-width="0.12" letter-spacing="0">F</text>
<text x="203.75" y="106.90" font-size="7.8" fill="#4a4a4a" text-anchor="middle" font-weight="normal" stroke="#4a4a4a" stroke-width="0.12" letter-spacing="0">G</text>
<text x="292.75" y="106.90" font-size="7.8" fill="#4a4a4a" text-anchor="middle" font-weight="normal" stroke="#4a4a4a" stroke-width="0.12" letter-spacing="0">H</text>
<text x="382.25" y="106.90" font-size="7.8" fill="#4a4a4a" text-anchor="middle" font-weight="normal" stroke="#4a4a4a" stroke-width="0.12" letter-spacing="0">I</text>
<text x="452.15" y="106.90" font-size="7.8" fill="#4a4a4a" text-anchor="middle" font-weight="normal" stroke="#4a4a4a" stroke-width="0.12" letter-spacing="0">J</text>
<text x="502.50" y="106.90" font-size="7.8" fill="#4a4a4a" text-anchor="middle" font-weight="normal" stroke="#4a4a4a" stroke-width="0.12" letter-spacing="0">K</text>
<text x="552.75" y="106.90" font-size="7.8" fill="#4a4a4a" text-anchor="middle" font-weight="normal" stroke="#4a4a4a" stroke-width="0.12" letter-spacing="0">L</text>
<text x="603.05" y="106.90" font-size="7.8" fill="#4a4a4a" text-anchor="middle" font-weight="normal" stroke="#4a4a4a" stroke-width="0.12" letter-spacing="0">M</text>
<text x="653.55" y="106.90" font-size="7.8" fill="#4a4a4a" text-anchor="middle" font-weight="normal" stroke="#4a4a4a" stroke-width="0.12" letter-spacing="0">N</text>
<text x="704.00" y="106.90" font-size="7.8" fill="#4a4a4a" text-anchor="middle" font-weight="normal" stroke="#4a4a4a" stroke-width="0.12" letter-spacing="0">O</text>
<text x="754.60" y="106.90" font-size="7.8" fill="#4a4a4a" text-anchor="middle" font-weight="normal" stroke="#4a4a4a" stroke-width="0.12" letter-spacing="0">P</text>
<text x="798.65" y="106.90" font-size="7.8" fill="#4a4a4a" text-anchor="middle" font-weight="normal" stroke="#4a4a4a" stroke-width="0.12" letter-spacing="0">Q</text>
<text x="840.50" y="106.90" font-size="7.8" fill="#4a4a4a" text-anchor="middle" font-weight="normal" stroke="#4a4a4a" stroke-width="0.12" letter-spacing="0">R</text>
<text x="886.85" y="106.90" font-size="7.8" fill="#4a4a4a" text-anchor="middle" font-weight="normal" stroke="#4a4a4a" stroke-width="0.12" letter-spacing="0">S</text>
<line x1="70.40" y1="101.00" x2="70.40" y2="111.25" stroke="#e2e2e2" stroke-width="0.7" />
<line x1="159.50" y1="101.00" x2="159.50" y2="111.25" stroke="#e2e2e2" stroke-width="0.7" />
<line x1="248.00" y1="101.00" x2="248.00" y2="111.25" stroke="#e2e2e2" stroke-width="0.7" />
<line x1="337.50" y1="101.00" x2="337.50" y2="111.25" stroke="#e2e2e2" stroke-width="0.7" />
<line x1="427.00" y1="101.00" x2="427.00" y2="111.25" stroke="#e2e2e2" stroke-width="0.7" />
<line x1="477.30" y1="101.00" x2="477.30" y2="111.25" stroke="#e2e2e2" stroke-width="0.7" />
<line x1="527.70" y1="101.00" x2="527.70" y2="111.25" stroke="#e2e2e2" stroke-width="0.7" />
<line x1="577.80" y1="101.00" x2="577.80" y2="111.25" stroke="#e2e2e2" stroke-width="0.7" />
<line x1="628.30" y1="101.00" x2="628.30" y2="111.25" stroke="#e2e2e2" stroke-width="0.7" />
<line x1="678.80" y1="101.00" x2="678.80" y2="111.25" stroke="#e2e2e2" stroke-width="0.7" />
<line x1="729.20" y1="101.00" x2="729.20" y2="111.25" stroke="#e2e2e2" stroke-width="0.7" />
<line x1="780.00" y1="101.00" x2="780.00" y2="111.25" stroke="#e2e2e2" stroke-width="0.7" />
<line x1="817.30" y1="101.00" x2="817.30" y2="111.25" stroke="#e2e2e2" stroke-width="0.7" />
<line x1="863.70" y1="101.00" x2="863.70" y2="111.25" stroke="#e2e2e2" stroke-width="0.7" />
<text x="11.90" y="119.88" font-size="8.5" fill="#4a4a4a" text-anchor="middle" font-weight="normal" textLength="4.1" lengthAdjust="spacingAndGlyphs" letter-spacing="0">1</text>
<line x1="0.00" y1="122.31" x2="24.30" y2="122.31" stroke="#e4e4e4" stroke-width="0.6" />
<text x="11.90" y="130.94" font-size="8.5" fill="#4a4a4a" text-anchor="middle" font-weight="normal" textLength="4.1" lengthAdjust="spacingAndGlyphs" letter-spacing="0">2</text>
<line x1="0.00" y1="133.37" x2="24.30" y2="133.37" stroke="#e4e4e4" stroke-width="0.6" />
<text x="11.90" y="141.99" font-size="8.5" fill="#4a4a4a" text-anchor="middle" font-weight="normal" textLength="4.1" lengthAdjust="spacingAndGlyphs" letter-spacing="0">3</text>
<line x1="0.00" y1="144.42" x2="24.30" y2="144.42" stroke="#e4e4e4" stroke-width="0.6" />
<text x="11.90" y="153.05" font-size="8.5" fill="#4a4a4a" text-anchor="middle" font-weight="normal" textLength="4.1" lengthAdjust="spacingAndGlyphs" letter-spacing="0">4</text>
<line x1="0.00" y1="155.48" x2="24.30" y2="155.48" stroke="#e4e4e4" stroke-width="0.6" />
<text x="11.90" y="164.11" font-size="8.5" fill="#4a4a4a" text-anchor="middle" font-weight="normal" textLength="4.1" lengthAdjust="spacingAndGlyphs" letter-spacing="0">5</text>
<line x1="0.00" y1="166.54" x2="24.30" y2="166.54" stroke="#e4e4e4" stroke-width="0.6" />
<text x="11.90" y="175.17" font-size="8.5" fill="#4a4a4a" text-anchor="middle" font-weight="normal" textLength="4.1" lengthAdjust="spacingAndGlyphs" letter-spacing="0">6</text>
<line x1="0.00" y1="177.60" x2="24.30" y2="177.60" stroke="#e4e4e4" stroke-width="0.6" />
<text x="11.90" y="186.23" font-size="8.5" fill="#4a4a4a" text-anchor="middle" font-weight="normal" textLength="4.1" lengthAdjust="spacingAndGlyphs" letter-spacing="0">7</text>
<line x1="0.00" y1="188.66" x2="24.30" y2="188.66" stroke="#e4e4e4" stroke-width="0.6" />
<text x="11.90" y="197.28" font-size="8.5" fill="#4a4a4a" text-anchor="middle" font-weight="normal" textLength="4.1" lengthAdjust="spacingAndGlyphs" letter-spacing="0">8</text>
<line x1="0.00" y1="199.71" x2="24.30" y2="199.71" stroke="#e4e4e4" stroke-width="0.6" />
<text x="11.90" y="208.34" font-size="8.5" fill="#4a4a4a" text-anchor="middle" font-weight="normal" textLength="4.1" lengthAdjust="spacingAndGlyphs" letter-spacing="0">9</text>
<line x1="0.00" y1="210.77" x2="24.30" y2="210.77" stroke="#e4e4e4" stroke-width="0.6" />
<text x="11.90" y="219.40" font-size="8.5" fill="#4a4a4a" text-anchor="middle" font-weight="normal" textLength="8.2" lengthAdjust="spacingAndGlyphs" letter-spacing="0">10</text>
<line x1="0.00" y1="221.83" x2="24.30" y2="221.83" stroke="#e4e4e4" stroke-width="0.6" />
<text x="11.90" y="230.46" font-size="8.5" fill="#4a4a4a" text-anchor="middle" font-weight="normal" textLength="8.2" lengthAdjust="spacingAndGlyphs" letter-spacing="0">11</text>
<line x1="0.00" y1="232.89" x2="24.30" y2="232.89" stroke="#e4e4e4" stroke-width="0.6" />
<text x="11.90" y="241.52" font-size="8.5" fill="#4a4a4a" text-anchor="middle" font-weight="normal" textLength="8.2" lengthAdjust="spacingAndGlyphs" letter-spacing="0">12</text>
<line x1="0.00" y1="243.95" x2="24.30" y2="243.95" stroke="#e4e4e4" stroke-width="0.6" />
<text x="11.90" y="252.57" font-size="8.5" fill="#4a4a4a" text-anchor="middle" font-weight="normal" textLength="8.2" lengthAdjust="spacingAndGlyphs" letter-spacing="0">13</text>
<line x1="0.00" y1="255.00" x2="24.30" y2="255.00" stroke="#e4e4e4" stroke-width="0.6" />
<text x="11.90" y="263.63" font-size="8.5" fill="#4a4a4a" text-anchor="middle" font-weight="normal" textLength="8.2" lengthAdjust="spacingAndGlyphs" letter-spacing="0">14</text>
<line x1="0.00" y1="266.06" x2="24.30" y2="266.06" stroke="#e4e4e4" stroke-width="0.6" />
<text x="11.90" y="274.69" font-size="8.5" fill="#4a4a4a" text-anchor="middle" font-weight="normal" textLength="8.2" lengthAdjust="spacingAndGlyphs" letter-spacing="0">15</text>
<line x1="0.00" y1="277.12" x2="24.30" y2="277.12" stroke="#e4e4e4" stroke-width="0.6" />
<text x="11.90" y="285.75" font-size="8.5" fill="#4a4a4a" text-anchor="middle" font-weight="normal" textLength="8.2" lengthAdjust="spacingAndGlyphs" letter-spacing="0">16</text>
<line x1="0.00" y1="288.18" x2="24.30" y2="288.18" stroke="#e4e4e4" stroke-width="0.6" />
<text x="11.90" y="296.81" font-size="8.5" fill="#4a4a4a" text-anchor="middle" font-weight="normal" textLength="8.2" lengthAdjust="spacingAndGlyphs" letter-spacing="0">17</text>
<line x1="0.00" y1="299.24" x2="24.30" y2="299.24" stroke="#e4e4e4" stroke-width="0.6" />
<text x="11.90" y="307.87" font-size="8.5" fill="#4a4a4a" text-anchor="middle" font-weight="normal" textLength="8.2" lengthAdjust="spacingAndGlyphs" letter-spacing="0">18</text>
<line x1="0.00" y1="310.29" x2="24.30" y2="310.29" stroke="#e4e4e4" stroke-width="0.6" />
<text x="11.90" y="318.92" font-size="8.5" fill="#4a4a4a" text-anchor="middle" font-weight="normal" textLength="8.2" lengthAdjust="spacingAndGlyphs" letter-spacing="0">19</text>
<line x1="0.00" y1="321.35" x2="24.30" y2="321.35" stroke="#e4e4e4" stroke-width="0.6" />
<text x="11.90" y="329.98" font-size="8.5" fill="#4a4a4a" text-anchor="middle" font-weight="normal" textLength="8.2" lengthAdjust="spacingAndGlyphs" letter-spacing="0">20</text>
<line x1="0.00" y1="332.41" x2="24.30" y2="332.41" stroke="#e4e4e4" stroke-width="0.6" />
<text x="11.90" y="341.04" font-size="8.5" fill="#4a4a4a" text-anchor="middle" font-weight="normal" textLength="8.2" lengthAdjust="spacingAndGlyphs" letter-spacing="0">21</text>
<line x1="0.00" y1="343.47" x2="24.30" y2="343.47" stroke="#e4e4e4" stroke-width="0.6" />
<text x="11.90" y="352.10" font-size="8.5" fill="#4a4a4a" text-anchor="middle" font-weight="normal" textLength="8.2" lengthAdjust="spacingAndGlyphs" letter-spacing="0">22</text>
<line x1="0.00" y1="354.53" x2="24.30" y2="354.53" stroke="#e4e4e4" stroke-width="0.6" />
<text x="11.90" y="363.16" font-size="8.5" fill="#4a4a4a" text-anchor="middle" font-weight="normal" textLength="8.2" lengthAdjust="spacingAndGlyphs" letter-spacing="0">23</text>
<line x1="0.00" y1="365.58" x2="24.30" y2="365.58" stroke="#e4e4e4" stroke-width="0.6" />
<text x="11.90" y="374.21" font-size="8.5" fill="#4a4a4a" text-anchor="middle" font-weight="normal" textLength="8.2" lengthAdjust="spacingAndGlyphs" letter-spacing="0">24</text>
<line x1="0.00" y1="376.64" x2="24.30" y2="376.64" stroke="#e4e4e4" stroke-width="0.6" />
<text x="11.90" y="385.27" font-size="8.5" fill="#4a4a4a" text-anchor="middle" font-weight="normal" textLength="8.2" lengthAdjust="spacingAndGlyphs" letter-spacing="0">25</text>
<text x="11.40" y="396.70" font-size="9.0" fill="#1e6b3c" text-anchor="middle" font-weight="bold" textLength="14.7" lengthAdjust="spacingAndGlyphs" letter-spacing="0" stroke="#1e6b3c" stroke-width="0.22">107</text>
<text x="11.90" y="407.90" font-size="8.5" fill="#4a4a4a" text-anchor="middle" font-weight="normal" textLength="12.3" lengthAdjust="spacingAndGlyphs" letter-spacing="0">108</text>
<line x1="0.00" y1="410.30" x2="24.30" y2="410.30" stroke="#e4e4e4" stroke-width="0.6" />
<text x="11.90" y="418.90" font-size="8.5" fill="#4a4a4a" text-anchor="middle" font-weight="normal" textLength="12.3" lengthAdjust="spacingAndGlyphs" letter-spacing="0">109</text>
<line x1="0.00" y1="421.30" x2="24.30" y2="421.30" stroke="#e4e4e4" stroke-width="0.6" />
<text x="11.90" y="429.90" font-size="8.5" fill="#4a4a4a" text-anchor="middle" font-weight="normal" textLength="12.3" lengthAdjust="spacingAndGlyphs" letter-spacing="0">110</text>
<line x1="0.00" y1="432.30" x2="24.30" y2="432.30" stroke="#e4e4e4" stroke-width="0.6" />
<text x="11.90" y="440.90" font-size="8.5" fill="#4a4a4a" text-anchor="middle" font-weight="normal" textLength="12.3" lengthAdjust="spacingAndGlyphs" letter-spacing="0">111</text>
<line x1="0.00" y1="443.30" x2="24.30" y2="443.30" stroke="#e4e4e4" stroke-width="0.6" />
<text x="11.90" y="451.90" font-size="8.5" fill="#4a4a4a" text-anchor="middle" font-weight="normal" textLength="12.3" lengthAdjust="spacingAndGlyphs" letter-spacing="0">112</text>
<line x1="0.00" y1="454.30" x2="24.30" y2="454.30" stroke="#e4e4e4" stroke-width="0.6" />
<text x="11.90" y="462.90" font-size="8.5" fill="#4a4a4a" text-anchor="middle" font-weight="normal" textLength="12.3" lengthAdjust="spacingAndGlyphs" letter-spacing="0">113</text>
<line x1="0.00" y1="465.30" x2="24.30" y2="465.30" stroke="#e4e4e4" stroke-width="0.6" />
<text x="11.90" y="473.90" font-size="8.5" fill="#4a4a4a" text-anchor="middle" font-weight="normal" textLength="12.3" lengthAdjust="spacingAndGlyphs" letter-spacing="0">114</text>
<line x1="0.00" y1="476.30" x2="24.30" y2="476.30" stroke="#e4e4e4" stroke-width="0.6" />
<text x="11.90" y="484.90" font-size="8.5" fill="#4a4a4a" text-anchor="middle" font-weight="normal" textLength="12.3" lengthAdjust="spacingAndGlyphs" letter-spacing="0">115</text>
<line x1="0.00" y1="487.30" x2="24.30" y2="487.30" stroke="#e4e4e4" stroke-width="0.6" />
<text x="11.90" y="495.90" font-size="8.5" fill="#4a4a4a" text-anchor="middle" font-weight="normal" textLength="12.3" lengthAdjust="spacingAndGlyphs" letter-spacing="0">116</text>
<line x1="0.00" y1="498.30" x2="24.30" y2="498.30" stroke="#e4e4e4" stroke-width="0.6" />
<text x="11.90" y="506.90" font-size="8.5" fill="#4a4a4a" text-anchor="middle" font-weight="normal" textLength="12.3" lengthAdjust="spacingAndGlyphs" letter-spacing="0">117</text>
<line x1="0.00" y1="509.30" x2="24.30" y2="509.30" stroke="#e4e4e4" stroke-width="0.6" />
<text x="11.90" y="517.90" font-size="8.5" fill="#4a4a4a" text-anchor="middle" font-weight="normal" textLength="12.3" lengthAdjust="spacingAndGlyphs" letter-spacing="0">118</text>
<line x1="0.00" y1="520.30" x2="24.30" y2="520.30" stroke="#e4e4e4" stroke-width="0.6" />
<path d="M21.7 100.3 V109.4 H13 Z" fill="#b5b5b5"/></svg>
<!-- title bar -->
<div class="a" style="left:0;top:0;width:886px;height:30px;background:#347546;"></div>
<svg class="a" style="left:0;top:0" width="886" height="30" viewBox="0 0 886 30">
  <!-- excel logo -->
  <g>
    <rect x="20" y="7.8" width="12.3" height="16" rx="1" fill="#fff"/>
    <g stroke="#347546" stroke-width="0.9">
      <line x1="22" y1="10.6" x2="31" y2="10.6" stroke-width="1.5"/><line x1="22" y1="13.4" x2="31" y2="13.4" stroke-width="1.5"/><line x1="22" y1="16.2" x2="31" y2="16.2" stroke-width="1.5"/><line x1="22" y1="19" x2="31" y2="19" stroke-width="1.5"/><line x1="22" y1="21.6" x2="31" y2="21.6" stroke-width="1.5"/>
      <line x1="27.2" y1="8.5" x2="27.2" y2="23" stroke="#fff" stroke-width="1"/>
    </g>
    <path d="M9.6 7.5 L22.8 4.7 V27.8 L9.6 24.8 Z" fill="#fff"/>
    <path transform="translate(0,0.6)" d="M12.6 11.3 h2.1 l1.5 2.9 l1.5 -2.9 h2.1 l-2.5 4.3 l2.6 4.4 h-2.2 l-1.6 -3 l-1.6 3 h-2.1 l2.6 -4.4 z" fill="#347546"/>
  </g>
  <line x1="78.5" y1="8" x2="78.5" y2="21" stroke="#5e9b78" stroke-width="0.8"/>
  <!-- toggle -->
  <rect x="702" y="10.6" width="23.8" height="10.8" rx="5.4" fill="#fff"/>
  <circle cx="720.2" cy="16" r="3.1" fill="#347546"/>
  <line x1="806.5" y1="9" x2="806.5" y2="22" stroke="#5e9b78" stroke-width="0.8"/>
</svg>
<div class="a" style="left:42.5px;top:8.6px;color:#fff;-webkit-text-stroke:0.2px #fff;font-size:11.4px;transform:scaleX(0.8391);transform-origin:0 50%;font-weight:bold;">Excel</div>
<div class="a" style="left:88px;top:11.0px;color:#fff;font-size:8.8px;transform:scaleX(0.8118);transform-origin:0 50%;font-weight:bold;">PowerApps Shared</div><svg class="a" style="left:156px;top:12px" width="8" height="9" viewBox="0 0 8 9"><path d="M2.4 1.8 l2.3 2.4 l-2.3 2.4" fill="none" stroke="#fff" stroke-width="0.95"/></svg><div class="a" style="left:164.7px;top:11.0px;color:#fff;font-size:8.8px;transform:scaleX(0.8088);transform-origin:0 50%;font-weight:bold;">Kitchen original files</div>
<div class="a" style="left:384.5px;top:9.4px;color:#fff;font-size:10.0px;transform:scaleX(0.8643);transform-origin:0 50%;font-weight:bold;">VÄRDSCHEMA V 3</div>
<div class="a" style="left:470px;top:10px;font-size:8.6px;color:#fff;">-</div>
<div class="a" style="left:482px;top:11.0px;color:#fff;font-size:9.0px;transform:scaleX(0.7919);transform-origin:0 50%;font-weight:bold;">Saved</div>
<div class="a" style="left:732px;top:11.0px;color:#fff;font-size:9.0px;transform:scaleX(0.7974);transform-origin:0 50%;font-weight:bold;">Simplified Ribbon</div>
<div class="a" style="left:818px;top:11.0px;color:#fff;font-size:9.0px;transform:scaleX(0.7998);transform-origin:0 50%;font-weight:bold;">Zahabia Brainch</div>

<!-- ribbon tabs -->
<div class="a" style="left:0;top:30px;width:886px;height:48px;background:#f3f2f1;"></div>
<div class="a t" style="left:16px;font-size:9.1px;transform:scaleX(0.7842);transform-origin:0 50%;">File</div>
<div class="a t" style="left:53.5px;color:#333;font-size:9.1px;transform:scaleX(0.9097);transform-origin:0 50%;font-weight:bold;">Home</div>
<div class="a" style="left:53.5px;top:51px;width:23px;height:1.6px;background:#2a7a48;"></div>
<div class="a t" style="left:98.5px;font-size:9.1px;transform:scaleX(0.8568);transform-origin:0 50%;">Insert</div>
<div class="a t" style="left:141.5px;font-size:9.1px;transform:scaleX(0.8306);transform-origin:0 50%;">Formulas</div>
<div class="a t" style="left:195.5px;font-size:9.1px;transform:scaleX(0.8324);transform-origin:0 50%;">Data</div>
<div class="a t" style="left:233.5px;font-size:9.1px;transform:scaleX(0.8211);transform-origin:0 50%;">Review</div>
<div class="a t" style="left:280px;font-size:9.1px;transform:scaleX(0.8435);transform-origin:0 50%;">View</div>
<div class="a t" style="left:318.5px;font-size:9.1px;transform:scaleX(0.8282);transform-origin:0 50%;">Help</div>
<div class="a t" style="left:363.5px;font-size:9.1px;transform:scaleX(0.8663);transform-origin:0 50%;">Open in Desktop App</div>
<div class="a t" style="left:477px;top:37.5px;font-size:9.1px;transform:scaleX(0.9573);transform-origin:0 50%;">Tell me what you want to do</div>
<svg class="a" style="left:458.2px;top:35.2px" width="12.6" height="16.2" viewBox="0 0 14 18">
  <path d="M7 2.2 a3.6 3.6 0 0 1 2.2 6.5 c-.5 .5 -.6 1 -.6 1.8 h-3.2 c0 -.8 -.1 -1.3 -.6 -1.8 a3.6 3.6 0 0 1 2.2 -6.5 z M5.6 12.2 h2.8" fill="none" stroke="#555" stroke-width="0.85"/>
</svg>
<style>
.t{top:36.7px;font-size:8.8px;color:#4a4a4a;letter-spacing:0.05px;}
.btn{top:33px;height:17px;background:#fff;border:0.8px solid #e1dfdd;border-radius:1.5px;box-sizing:border-box;}
.bt{top:36.4px;font-size:8.8px;color:#1e6b3c;font-weight:bold;letter-spacing:0.1px;}
.st{top:525.6px;font-size:9.2px;color:#505050;}
.lk{display:inline-block;width:4.4px;height:3.6px;border-radius:0.6px;background:#a0a0a0;position:relative;margin-left:2.2px;top:0.2px;}
.lk:before{content:"";position:absolute;left:0.8px;top:-2.4px;width:1.4px;height:2.4px;border:0.7px solid #a0a0a0;border-bottom:0;border-radius:1.4px 1.4px 0 0;box-sizing:content-box;}
</style>
<div class="a btn" style="left:701px;width:46.5px;"></div>
<div class="a btn" style="left:752.5px;width:65px;"></div>
<div class="a btn" style="left:823px;width:58.5px;"></div>
<div class="a bt" style="left:718px;font-size:9.3px;transform:scaleX(0.8898);transform-origin:0 50%;font-weight:bold;">Share</div>
<div class="a bt" style="left:769.5px;font-size:9.3px;transform:scaleX(0.8843);transform-origin:0 50%;font-weight:bold;">Comments</div>
<div class="a bt" style="left:840.5px;font-size:9.3px;transform:scaleX(0.8923);transform-origin:0 50%;font-weight:bold;">Catch up</div>
<svg class="a" style="left:700px;top:32px" width="186" height="20" viewBox="0 0 186 20">
  <g fill="none" stroke="#1e6b3c" stroke-width="0.8">
    <path d="M7 9.6 v5.4 h7.6 v-2.4 M9.2 12.4 c.5 -2.4 1.9 -3.3 3.7 -3.3 v-1.7 l2.6 2.5 l-2.6 2.5 v-1.7"/>
    <path d="M58.6 6.3 h8 v5.6 h-4.6 l-2 1.9 v-1.9 h-1.4 z"/>
    <path d="M128.5 9.6 h2 l1.3 -2.6 l1.9 5.2 l1.3 -2.6 h2"/>
  </g>
</svg>

<!-- ribbon row icons -->
<svg class="a" style="left:0;top:55px" width="886" height="23" viewBox="0 0 886 23" font-family='"Liberation Sans", sans-serif'>
  <g fill="none" stroke="#acacac" stroke-width="0.9">
    <!-- undo -->
    <path d="M15.2 6.2 v4 h4 M15.6 10 c1.6 -3 5.6 -3.2 7 -.6 c1.2 2.4 -.8 4.4 -3.4 6"/>
  </g>
  <g fill="none" stroke="#555" stroke-width="0.9">
    <path d="M29.3 8.6 l2.9 2.9 l2.9 -2.9"/>
    <!-- paste -->
    <rect x="47.5" y="6.5" width="8.2" height="9" rx="0.7" stroke="#707070"/><rect x="49.4" y="4.8" width="4.4" height="2.8" rx="0.5" fill="#f3f2f1" stroke="#707070"/>
    <path d="M58.7 8.6 l2.9 2.9 l2.9 -2.9"/>
  </g>
  <!-- format painter -->
  <g>
    <path d="M77.6 9.4 L83.1 14.8 L86.8 11.4 L82.4 6.9 Z" fill="#fbdcbf" stroke="#e98a3e" stroke-width="0.9" stroke-linejoin="round"/>
    <path d="M80 11.6 L84.6 13" fill="none" stroke="#ee9a52" stroke-width="1.1"/>
    <path d="M83 7.2 l2.6 -2.6 l2.8 1.6 l-1.4 4.6" fill="none" stroke="#8c8c8c" stroke-width="0.9"/>
    <path d="M85.6 4.8 l1.2 3.4" fill="none" stroke="#9a9a9a" stroke-width="0.7"/>
  </g>
  <line x1="99.5" y1="2" x2="99.5" y2="19" stroke="#dcdcdc" stroke-width="0.8"/>
  <!-- font name / size boxes -->
  <rect x="102.4" y="1.6" width="109.4" height="17.4" fill="#fff" stroke="#dedcda" stroke-width="0.8"/>
  <line x1="180.4" y1="2" x2="180.4" y2="18.8" stroke="#dedcda" stroke-width="0.8"/>
  <text x="105.4" y="13.2" font-size="9.3" fill="#333" textLength="30" lengthAdjust="spacingAndGlyphs">Verdana</text>
  <text x="183" y="13.2" font-size="9.3" fill="#333">9</text>
  <g fill="none" stroke="#555" stroke-width="0.9">
    <path d="M172.1 8.4 l2.9 2.9 l2.9 -2.9"/><path d="M203.5 8.4 l2.9 2.9 l2.9 -2.9"/>
  </g>
  <text x="226" y="14" font-size="11" font-weight="bold" fill="#222">B</text>
  <!-- font color -->
  <text x="253.6" y="12.4" font-size="9.6" fill="#444">A</text>
  <rect x="251.8" y="13.4" width="11.2" height="2.4" fill="#e03a2a"/>
  <!-- fill color -->
  <path d="M285.6 9.4 l3.4 -3.4 l3.6 3.6 l-3.4 3.2 z" fill="none" stroke="#555" stroke-width="0.8"/>
  <path d="M292 7 c1.4 .8 1.8 2.2 1.4 3.6" fill="none" stroke="#2b7cd3" stroke-width="1"/>
  <rect x="284.2" y="13.4" width="11.6" height="2.4" fill="#f5e11a"/>
  <!-- borders -->
  <g fill="none" stroke="#a0a0a0" stroke-width="0.7"><rect x="316.4" y="5.4" width="9.8" height="9.8"/><path d="M321.3 5.4 v9.8 M316.4 10.3 h9.8"/></g>
  <g fill="none" stroke="#555" stroke-width="0.9">
    <path d="M267.9 8.4 l2.9 2.9 l2.9 -2.9"/><path d="M300.1 8.4 l2.9 2.9 l2.9 -2.9"/><path d="M331.9 8.4 l2.9 2.9 l2.9 -2.9"/>
  </g>
  <g fill="#333"><circle cx="348.6" cy="10.6" r="0.9"/><circle cx="352.6" cy="10.6" r="0.9"/><circle cx="356.6" cy="10.6" r="0.9"/></g>
  <line x1="369.5" y1="2" x2="369.5" y2="19" stroke="#dcdcdc" stroke-width="0.8"/>
  <!-- align -->
  <g stroke="#555" stroke-width="0.8"><path d="M380.4 5.4 h11 M380.4 7.8 h8 M380.4 10.2 h11 M380.4 12.6 h8 M380.4 15 h11"/></g>
  <path d="M393.9 8.4 l2.9 2.9 l2.9 -2.9" fill="none" stroke="#555" stroke-width="0.9"/>
  <!-- wrap -->
  <text x="412.6" y="10.8" font-size="7.4" fill="#555">ab</text>
  <text x="412.6" y="16.2" font-size="6.4" fill="#555">c</text>
  <path d="M419.6 9 c2.6 1 2.4 4.6 -1 4.6 m1.2 -1.4 l-1.6 1.4 l1.6 1.4" fill="none" stroke="#2b7cd3" stroke-width="0.8"/>
  <!-- merge (disabled) -->
  <g fill="none" stroke="#a9c4e6" stroke-width="0.8"><rect x="439.6" y="4.8" width="10" height="11"/><path d="M439.6 7.6 h10 M439.6 13 h10 M441.6 10.3 h6 m-4.6 -1.2 l-1.4 1.2 l1.4 1.2 m3.2 -2.4 l1.4 1.2 l-1.4 1.2"/></g>
  <path d="M454.9 8.4 l2.9 2.9 l2.9 -2.9" fill="none" stroke="#d0d0d0" stroke-width="0.9"/>
  <line x1="465.5" y1="2" x2="465.5" y2="19" stroke="#dcdcdc" stroke-width="0.8"/>
  <!-- number format -->
  <rect x="468.6" y="1.6" width="77.6" height="17.4" fill="#fff" stroke="#dedcda" stroke-width="0.8"/>
  <text x="472" y="13.2" font-size="9.3" fill="#333" textLength="29" lengthAdjust="spacingAndGlyphs">Custom</text>
  <path d="M538.9 8.4 l2.9 2.9 l2.9 -2.9" fill="none" stroke="#555" stroke-width="0.9"/>
  <!-- decimals -->
  <g font-size="6.5" fill="#8a8a8a"><text x="566.2" y="9.6">.0</text><text x="560.6" y="15.8">.00</text><text x="589.4" y="9.6">.00</text><text x="592.6" y="15.8">.0</text></g>
  <path d="M565.6 7.2 h-4.6 m1.5 -1.5 l-1.5 1.5 l1.5 1.5" fill="none" stroke="#2b7cd3" stroke-width="0.8"/>
  <path d="M587.2 13.5 h4.8 m-1.5 -1.5 l1.5 1.5 l-1.5 1.5" fill="none" stroke="#2b7cd3" stroke-width="0.8"/>
  <!-- conditional fmt -->
  <g>
    <rect x="614" y="4.9" width="11.1" height="10.2" fill="#fff"/>
    <rect x="614" y="4.9" width="5.6" height="10.2" fill="#e9574c"/>
    <rect x="616.8" y="8.3" width="2.8" height="3.4" fill="#4a86d8"/>
    <path d="M614 4.9 h11.1 v10.2 h-11.1 z M614 8.3 h11.1 M614 11.7 h11.1 M616.8 4.9 v10.2 M619.6 4.9 v10.2 M622.3 4.9 v10.2" fill="none" stroke="#6a6a6a" stroke-width="0.55"/>
  </g>
  <g>
    <rect x="645.4" y="4.9" width="11.4" height="10.2" fill="#fff"/>
    <rect x="651.1" y="8.3" width="5.7" height="6.8" fill="#4a8fe0"/>
    <path d="M645.4 4.9 h11.4 v10.2 h-11.4 z M645.4 8.3 h11.4 M645.4 11.7 h11.4 M648.2 4.9 v10.2 M651.1 4.9 v10.2 M653.9 4.9 v10.2" fill="none" stroke="#6a6a6a" stroke-width="0.55"/>
    <path d="M656.9 6.4 L650.2 15.4" stroke="#8294ae" stroke-width="1.7" fill="none"/>
    <path d="M650.9 14.6 L649.4 16.6" stroke="#4a8fe0" stroke-width="1.6" fill="none"/>
  </g>
  <g>
    <rect x="677" y="4.9" width="11" height="10.2" fill="#fff"/>
    <rect x="680.2" y="8.0" width="4.6" height="4.0" fill="#4a8fe0"/>
    <path d="M677 4.9 h11 v10.2 h-11 z M677 8.0 h11 M677 12.0 h11 M680.2 4.9 v10.2 M684.8 4.9 v10.2" fill="none" stroke="#6a6a6a" stroke-width="0.55"/>
    <path d="M679.2 3.5 h6.6" stroke="#7aa9e6" stroke-width="0.7"/>
  </g>
  <g fill="none" stroke="#555" stroke-width="0.9">
    <path d="M627.7 8.4 l2.9 2.9 l2.9 -2.9"/><path d="M659.1 8.4 l2.9 2.9 l2.9 -2.9"/><path d="M690.5 8.4 l2.9 2.9 l2.9 -2.9"/>
  </g>
  <line x1="703.5" y1="2" x2="703.5" y2="19" stroke="#dcdcdc" stroke-width="0.8"/>
  <!-- sum (disabled) -->
  <path d="M723.4 6 h-7.6 l4 4.6 l-4 4.6 h7.6" fill="none" stroke="#c2c2c2" stroke-width="0.8"/>
  <path d="M730 8.6 l2.2 2.2 l2.2 -2.2" fill="none" stroke="#dcdcdc" stroke-width="0.9"/>
  <!-- sort/filter -->
  <text x="746.4" y="9.6" font-size="5.8" fill="#2b7cd3">A</text><text x="746.4" y="16.2" font-size="5.8" fill="#444">Z</text>
  <path d="M751.8 8 h6.2 l-2.4 3 v3.4 l-1.4 -.8 v-2.6 z" fill="none" stroke="#444" stroke-width="0.8"/>
  <path d="M759.5 8.4 l2.9 2.9 l2.9 -2.9" fill="none" stroke="#555" stroke-width="0.9"/>
  <!-- find -->
  <circle cx="785.6" cy="9.2" r="3.5" fill="none" stroke="#444" stroke-width="0.9"/><path d="M783 12 l-4.4 4.2" stroke="#444" stroke-width="0.9"/>
  <path d="M790.9 8.4 l2.9 2.9 l2.9 -2.9" fill="none" stroke="#555" stroke-width="0.9"/>
  <line x1="803.5" y1="2" x2="803.5" y2="19" stroke="#dcdcdc" stroke-width="0.8"/>
  <path d="M818.6 4.6 h3.8 l-1.6 4 h3 l-6.2 7.6 l1.6 -5.2 h-2.6 z" fill="#3b86e0"/>
  <line x1="836.5" y1="2" x2="836.5" y2="19" stroke="#dcdcdc" stroke-width="0.8"/>
  <g fill="#333"><circle cx="846.2" cy="10.6" r="0.9"/><circle cx="851.2" cy="10.6" r="0.9"/><circle cx="856.2" cy="10.6" r="0.9"/></g>
</svg>

<!-- formula bar -->
<div class="a" style="left:0;top:78px;width:886px;height:19.5px;background:#edebe9;"></div>
<div class="a" style="left:4px;top:81px;width:74px;height:14px;background:#fff;"></div>
<div class="a" style="left:81.4px;top:81px;width:17.6px;height:14px;background:#fff;"></div>
<div class="a" style="left:102px;top:81px;width:781.8px;height:14px;background:#fff;"></div>
<div class="a" style="left:5.6px;top:82.8px;color:#333;font-size:8.6px;transform:scaleX(0.8962);transform-origin:0 50%;">E107</div>
<div class="a" style="left:86.6px;top:81.8px;font-size:9.2px;color:#3a3a3a;font-style:italic;font-weight:bold;font-family:'Liberation Serif',serif;">f<span style="font-size:6.4px;">x</span></div>
<svg class="a" style="left:70px;top:84px" width="8" height="8"><path d="M3.4 2.5 l1.3 1.4 l1.3 -1.4" fill="none" stroke="#555" stroke-width="0.8"/></svg>

<!-- sheet tab bar -->
<div class="a" style="left:0;top:524px;width:886px;height:17px;background:#f1f1f1;"></div>
<svg class="a" style="left:0;top:524px" width="886" height="17" viewBox="0 0 886 17">
  <path d="M9.6 5.4 l-1.8 2.4 l1.8 2.4" fill="none" stroke="#cfcfcf" stroke-width="0.8"/>
  <path d="M24.4 5 l2.2 2.8 l-2.2 2.8 z" fill="#555"/>
  <g stroke="#cfcfcf" stroke-width="0.8">
    <line x1="51.5" y1="2.4" x2="51.5" y2="13.6"/><line x1="114.5" y1="2.4" x2="114.5" y2="13.6"/><line x1="172.5" y1="2.4" x2="172.5" y2="13.6"/><line x1="234.5" y1="2.4" x2="234.5" y2="13.6"/><line x1="297" y1="2.4" x2="297" y2="13.6"/><line x1="356.5" y1="2.4" x2="356.5" y2="13.6"/><line x1="566.5" y1="2.4" x2="566.5" y2="13.6"/>
  </g>
  <rect x="416" y="0" width="64.4" height="15.6" fill="#fff"/>
  <rect x="416" y="14.4" width="64.4" height="1.6" fill="#2a7a48"/>
  <g fill="#a2a2a2" stroke="#a2a2a2"><rect x="94.8" y="6.0" width="4.2" height="3.5" rx="0.5" stroke="none"/><path d="M95.75 6.2 v-1.3 a1.15 1.15 0 0 1 2.3 0 v1.3" fill="none" stroke-width="0.75"/></g>
<g fill="#a2a2a2" stroke="#a2a2a2"><rect x="153.2" y="6.0" width="4.2" height="3.5" rx="0.5" stroke="none"/><path d="M154.15 6.2 v-1.3 a1.15 1.15 0 0 1 2.3 0 v1.3" fill="none" stroke-width="0.75"/></g>
<g fill="#a2a2a2" stroke="#a2a2a2"><rect x="214.9" y="6.0" width="4.2" height="3.5" rx="0.5" stroke="none"/><path d="M215.85 6.2 v-1.3 a1.15 1.15 0 0 1 2.3 0 v1.3" fill="none" stroke-width="0.75"/></g>
<g fill="#a2a2a2" stroke="#a2a2a2"><rect x="276.9" y="6.0" width="4.2" height="3.5" rx="0.5" stroke="none"/><path d="M277.85 6.2 v-1.3 a1.15 1.15 0 0 1 2.3 0 v1.3" fill="none" stroke-width="0.75"/></g>
<g fill="#a2a2a2" stroke="#a2a2a2"><rect x="336.7" y="6.0" width="4.2" height="3.5" rx="0.5" stroke="none"/><path d="M337.65 6.2 v-1.3 a1.15 1.15 0 0 1 2.3 0 v1.3" fill="none" stroke-width="0.75"/></g>
<g fill="#a2a2a2" stroke="#a2a2a2"><rect x="395.9" y="6.0" width="4.2" height="3.5" rx="0.5" stroke="none"/><path d="M396.85 6.2 v-1.3 a1.15 1.15 0 0 1 2.3 0 v1.3" fill="none" stroke-width="0.75"/></g>
<g fill="#e9b44c" stroke="#e9b44c"><rect x="461.4" y="6.0" width="4.2" height="3.5" rx="0.5" stroke="none"/><path d="M462.35 6.2 v-1.3 a1.15 1.15 0 0 1 2.3 0 v1.3" fill="none" stroke-width="0.75"/></g>
<circle cx="656.8" cy="7.6" r="4.4" fill="#fff" stroke="#888" stroke-width="0.7"/><path d="M654.4 7.6 h4.8 M656.8 5.2 v4.8" stroke="#666" stroke-width="0.7"/>
  <g fill="#333"><circle cx="636.4" cy="11.4" r="0.7"/><circle cx="639.8" cy="11.4" r="0.7"/><circle cx="643.2" cy="11.4" r="0.7"/></g>
</svg>
<div class="a st" style="left:64.3px;font-size:9.1px;transform:scaleX(0.8757);transform-origin:0 50%;">Måndag</div>
<div class="a st" style="left:127px;font-size:9.1px;transform:scaleX(0.8526);transform-origin:0 50%;">Tisdag</div>
<div class="a st" style="left:185.2px;font-size:9.1px;transform:scaleX(0.8597);transform-origin:0 50%;">Onsdag</div>
<div class="a st" style="left:247.2px;font-size:9.1px;transform:scaleX(0.8371);transform-origin:0 50%;">Torsdag</div>
<div class="a st" style="left:309.6px;font-size:9.1px;transform:scaleX(0.8462);transform-origin:0 50%;">Fredag</div>
<div class="a st" style="left:368.9px;font-size:9.1px;transform:scaleX(0.8611);transform-origin:0 50%;">Lördag</div>
<div class="a st" style="left:428.2px;top:526.6px;color:#1e6b3c;font-size:9.2px;transform:scaleX(0.8923);transform-origin:0 50%;font-weight:bold;">Söndag</div>
<div class="a st" style="left:493.2px;top:525.0px;font-size:9.1px;transform:scaleX(0.8871);transform-origin:0 50%;">Dagliga rutiner</div>
<div class="a st" style="left:579px;top:525.0px;font-size:9.1px;transform:scaleX(0.8528);transform-origin:0 50%;">Ej Återbesök</div>

<!-- status bar -->
<div class="a" style="left:0;top:541px;width:886px;height:13px;background:#ffffff;"></div>
<div class="a" style="left:9.5px;top:543.4px;color:#444;font-size:7.2px;transform:scaleX(0.9611);transform-origin:0 50%;">Calculation Mode: Automatic</div>
<div class="a" style="left:410.9px;top:543.4px;color:#444;font-size:7.2px;transform:scaleX(0.8780);transform-origin:0 50%;">Outer Ring (PPE) : PP4</div>
<div class="a" style="left:820.3px;top:543.4px;color:#444;font-size:7.2px;transform:scaleX(0.9403);transform-origin:0 50%;">Help Improve Office</div>
<svg class="a" style="left:790px;top:544px" width="10" height="8"><path d="M2.1 2.6 l1.9 2.1 l1.9 -2.1 z" fill="#777"/></svg>

</div>
</body></html>
